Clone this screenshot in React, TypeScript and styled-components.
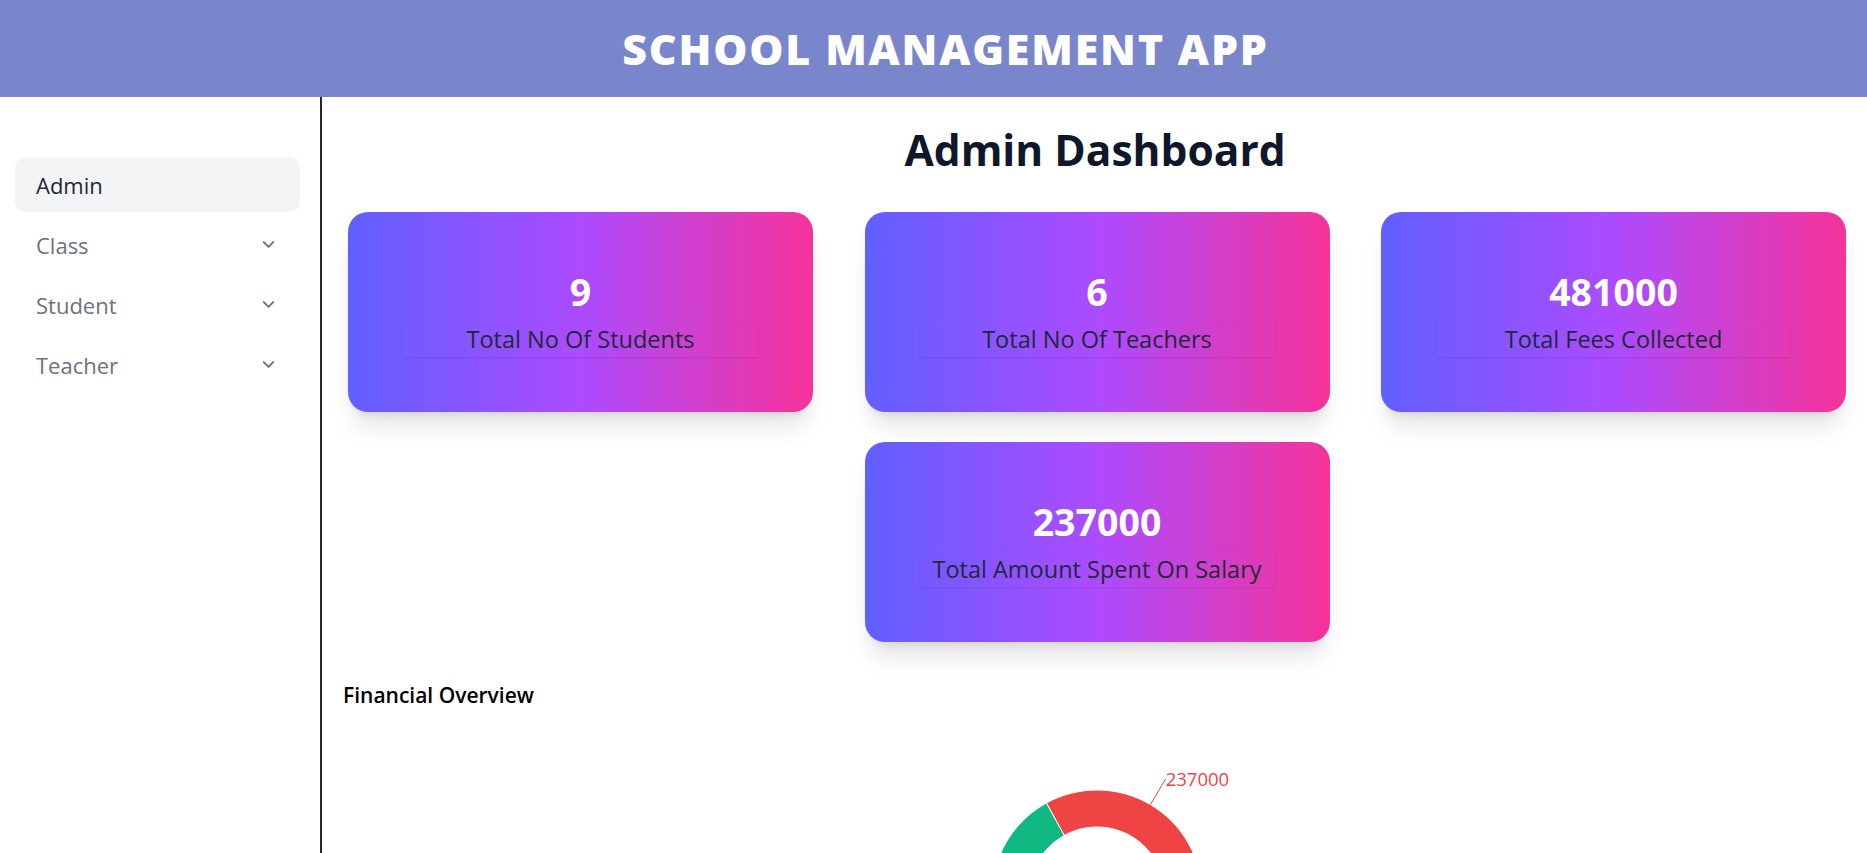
import React from "react";
import styled, { createGlobalStyle } from "styled-components";
import { ChevronDown } from "lucide-react";

const GlobalStyle = createGlobalStyle`
  html, body { margin: 0; padding: 0; background: #ffffff; }
  body { font-family: "Open Sans", "Noto Sans", sans-serif; }
  * { box-sizing: border-box; }
`;

const Page = styled.div`
  display: flex;
  flex-direction: column;
  min-height: 100vh;
`;

const Header = styled.header`
  height: 97px;
  background: #7986cb;
  display: flex;
  align-items: center;
  justify-content: center;
  padding-left: 24px;
`;

const AppTitle = styled.h1`
  margin: 0;
  color: #ffffff;
  font-family: "Open Sans", sans-serif;
  font-weight: 800;
  font-size: 43px;
  letter-spacing: 1.8px;
`;

const Body = styled.div`
  display: flex;
  flex: 1;
`;

const Sidebar = styled.aside`
  width: 322px;
  flex-shrink: 0;
  border-right: 2px solid #262626;
  padding: 60px 20px 0 15px;
  display: flex;
  flex-direction: column;
  gap: 5px;
`;

const NavItem = styled.div<{ $active?: boolean }>`
  height: 55px;
  border-radius: 10px;
  display: flex;
  align-items: center;
  justify-content: space-between;
  padding: 0 22px 0 21px;
  background: ${(p) => (p.$active ? "#f3f4f6" : "transparent")};
  color: ${(p) => (p.$active ? "#1f2937" : "#6b7280")};
  font-size: 22px;
  font-weight: 500;
  svg { color: #6b7280; }
`;

const Main = styled.main`
  flex: 1;
  padding: 26px 20px 0 21px;
  display: flex;
  flex-direction: column;
`;

const PageTitle = styled.h2`
  margin: 0;
  text-align: center;
  font-size: 42.5px;
  line-height: 54px;
  font-weight: 700;
  color: #0f172a;
`;

const CardGrid = styled.div`
  margin-top: 35px;
  padding-left: 5px;
  display: grid;
  grid-template-columns: repeat(3, 465px);
  column-gap: 51.5px;
  row-gap: 30px;
`;

const Card = styled.div<{ $col?: number }>`
  grid-column: ${(p) => p.$col ?? "auto"};
  height: 200px;
  border-radius: 20px;
  background: linear-gradient(to right, #615fff, #ac4bff, #f6339a);
  box-shadow: 0 20px 25px -5px rgba(0, 0, 0, 0.1), 0 8px 10px -6px rgba(0, 0, 0, 0.1);
  display: flex;
  flex-direction: column;
  align-items: center;
  justify-content: center;
  gap: 10px;
  padding-top: 5px;
`;

const CardValue = styled.div`
  color: #ffffff;
  font-size: 37.5px;
  line-height: 40px;
  font-weight: 700;
`;

const CardLabel = styled.div`
  width: 355px;
  height: 35px;
  line-height: 35px;
  text-align: center;
  font-size: 23.5px;
  color: #1f2937;
  box-shadow: 0 1px 3px rgba(0, 0, 0, 0.06), 0 1px 2px rgba(0, 0, 0, 0.04);
`;

const ChartSection = styled.section`
  margin-top: 39px;
`;

const ChartTitle = styled.h3`
  margin: 0;
  font-size: 21px;
  font-weight: 600;
  color: #000000;
`;

const ChartSvg = styled.svg`
  display: block;
  margin-top: 6px;
  overflow: visible;
`;

const cards = [
  { value: "9", label: "Total No Of Students" },
  { value: "6", label: "Total No Of Teachers" },
  { value: "481000", label: "Total Fees Collected" },
  { value: "237000", label: "Total Amount Spent On Salary", col: 2 },
];

const navItems = [
  { label: "Admin", active: true, chevron: false },
  { label: "Class", chevron: true },
  { label: "Student", chevron: true },
  { label: "Teacher", chevron: true },
];

const rad = (d: number) => (d * Math.PI) / 180;

function arcPath(cx: number, cy: number, R: number, r: number, a0: number, a1: number) {
  const p = (rr: number, a: number) => [cx + rr * Math.cos(rad(a)), cy - rr * Math.sin(rad(a))];
  const [x0, y0] = p(R, a0);
  const [x1, y1] = p(R, a1);
  const [x2, y2] = p(r, a1);
  const [x3, y3] = p(r, a0);
  const large = a1 - a0 > 180 ? 1 : 0;
  return `M${x0},${y0} A${R},${R} 0 ${large} 0 ${x1},${y1} L${x2},${y2} A${r},${r} 0 ${large} 1 ${x3},${y3} Z`;
}

function Donut() {
  const W = 1504;
  const H = 360;
  const cx = 754;
  const cy = 180;
  const R = 105;
  const r = 68;
  const data = [
    { name: "Salary", value: 237000, color: "#ef4444" },
    { name: "Fees", value: 481000, color: "#10b981" },
  ];
  const total = data.reduce((s, d) => s + d.value, 0);
  let start = 0;
  return (
    <ChartSvg width={W} height={H} viewBox={`0 0 ${W} ${H}`}>
      {data.map((d) => {
        const sweep = (d.value / total) * 360;
        const a0 = start;
        const a1 = start + sweep;
        start = a1;
        const mid = (a0 + a1) / 2;
        const sx = cx + R * Math.cos(rad(mid));
        const sy = cy - R * Math.sin(rad(mid));
        const ex = cx + (R + 30) * Math.cos(rad(mid));
        const ey = cy - (R + 30) * Math.sin(rad(mid));
        const anchor = Math.cos(rad(mid)) >= 0 ? "start" : "end";
        return (
          <g key={d.name}>
            <path d={arcPath(cx, cy, R, r, a0, a1)} fill={d.color} stroke="#ffffff" strokeWidth={1} />
            <line x1={sx} y1={sy} x2={ex} y2={ey} stroke={d.color} strokeWidth={1} />
            <text
              x={ex}
              y={ey}
              fill={d.color}
              textAnchor={anchor}
              dominantBaseline="central"
              fontSize={18.5}
              fontFamily="Open Sans, sans-serif"
            >
              {d.value}
            </text>
          </g>
        );
      })}
    </ChartSvg>
  );
}

export default function App() {
  return (
    <Page>
      <GlobalStyle />
      <Header>
        <AppTitle>SCHOOL MANAGEMENT APP</AppTitle>
      </Header>
      <Body>
        <Sidebar>
          {navItems.map((n) => (
            <NavItem key={n.label} $active={n.active}>
              <span>{n.label}</span>
              {n.chevron && <ChevronDown size={19} strokeWidth={2.5} />}
            </NavItem>
          ))}
        </Sidebar>
        <Main>
          <PageTitle>Admin Dashboard</PageTitle>
          <CardGrid>
            {cards.map((c) => (
              <Card key={c.label} $col={c.col}>
                <CardValue>{c.value}</CardValue>
                <CardLabel>{c.label}</CardLabel>
              </Card>
            ))}
          </CardGrid>
          <ChartSection>
            <ChartTitle>Financial Overview</ChartTitle>
            <Donut />
          </ChartSection>
        </Main>
      </Body>
    </Page>
  );
}
